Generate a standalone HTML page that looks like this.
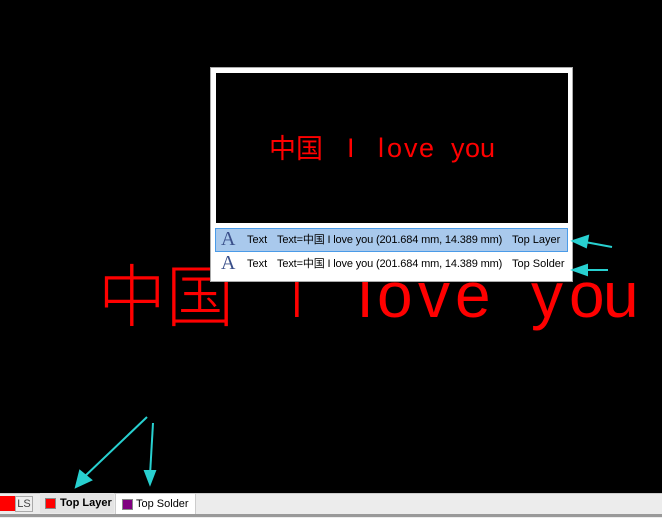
<!DOCTYPE html>
<html><head><meta charset="utf-8"><style>
body{margin:0;width:662px;height:517px;background:#000;position:relative;overflow:hidden;font-family:"Liberation Sans","Noto Sans CJK SC",sans-serif}
.a{position:absolute;white-space:nowrap}
.b{position:absolute;color:#f00;font-family:"Liberation Sans",sans-serif;font-size:64px;line-height:66px;top:262px}
.s{position:absolute;color:#f00;font-family:"Liberation Sans",sans-serif;font-size:27px;line-height:28px;top:134px}
.row{position:absolute;left:215px;width:353px;height:22px;font-size:11px;line-height:22px;color:#000}
.row span{position:absolute}
</style></head><body>
<div class="a" style="left:98px;top:256px;color:#f00;font-family:'Noto Sans CJK SC',sans-serif;font-weight:300;font-size:68px;line-height:72px">中国</div>
<div class="b" style="left:288px;transform:scaleX(0.6)">I</div>
<div class="b" style="left:358px">l</div>
<div class="b" style="left:377px">o</div>
<div class="b" style="left:418px">v</div>
<div class="b" style="left:455px">e</div>
<div class="b" style="left:531px">y</div>
<div class="b" style="left:569px">o</div>
<div class="b" style="left:603px">u</div>

<div class="a" style="left:210px;top:67px;width:361px;height:213px;background:#fff;border:1px solid #aaa"></div>
<div class="a" style="left:216px;top:73px;width:352px;height:150px;background:#000"></div>
<div class="a" style="left:269px;top:132px;color:#f00;font-family:'Noto Sans CJK SC',sans-serif;font-size:27px;line-height:30px">中国</div>
<div class="s" style="left:347px">I</div>
<div class="s" style="left:378px">l</div>
<div class="s" style="left:387px">o</div>
<div class="s" style="left:404px">v</div>
<div class="s" style="left:419px">e</div>
<div class="s" style="left:451px">y</div>
<div class="s" style="left:465px">o</div>
<div class="s" style="left:480px">u</div>

<div class="row" style="top:228px;background:#a9c9ec;border:1px solid #4a9be8;height:22px;width:351px"><span style="left:5px;top:-1px;font-family:'Liberation Serif',serif;font-size:20px;color:#3a4f8a">A</span><span style="left:31px">Text</span><span style="left:61px;letter-spacing:-0.15px">Text=中国 I love you (201.684 mm, 14.389 mm)</span><span style="left:296px">Top Layer</span></div>
<div class="row" style="top:253px"><span style="left:6px;top:-1px;font-family:'Liberation Serif',serif;font-size:20px;color:#3a4f8a">A</span><span style="left:32px">Text</span><span style="left:62px;letter-spacing:-0.15px">Text=中国 I love you (201.684 mm, 14.389 mm)</span><span style="left:297px">Top Solder</span></div>

<svg class="a" style="left:0;top:0" width="662" height="517">
<g fill="#28d0d0" stroke="#28d0d0" stroke-width="2">
<line x1="612" y1="247" x2="585" y2="242"/><polygon points="573,241 588,236 586,247"/>
<line x1="608" y1="270" x2="585" y2="270"/><polygon points="573,270 587,265 587,275"/>
<line x1="147" y1="417" x2="83" y2="478"/><polygon points="76,487 80,471 91,480"/>
<line x1="153" y1="423" x2="150" y2="475"/><polygon points="150,484 145,471 155,471"/>
</g></svg>

<div class="a" style="left:0;top:493px;width:662px;height:24px;background:#ececec;border-top:1px solid #ccc"></div>
<div class="a" style="left:0;top:496px;width:15px;height:15px;background:#f00"></div>
<div class="a" style="left:15px;top:496px;width:16px;height:14px;border:1px solid #aaa;background:#eee;font-size:11px;line-height:14px;text-align:center;color:#444">LS</div>
<div class="a" style="left:40px;top:493px;width:74px;height:20px;background:#e4e4e4;font-size:11px;font-weight:bold;line-height:20px"><span style="position:absolute;left:5px;top:5px;width:9px;height:9px;background:#f00;border:1px solid #888"></span><span style="position:absolute;left:20px">Top Layer</span></div>
<div class="a" style="left:115px;top:493px;width:79px;height:20px;background:#fff;border:1px solid #ccc;font-size:11px;line-height:20px"><span style="position:absolute;left:6px;top:5px;width:9px;height:9px;background:#800080;border:1px solid #888"></span><span style="position:absolute;left:20px">Top Solder</span></div>
<div class="a" style="left:0;top:514px;width:662px;height:3px;background:#999"></div>
</body></html>
